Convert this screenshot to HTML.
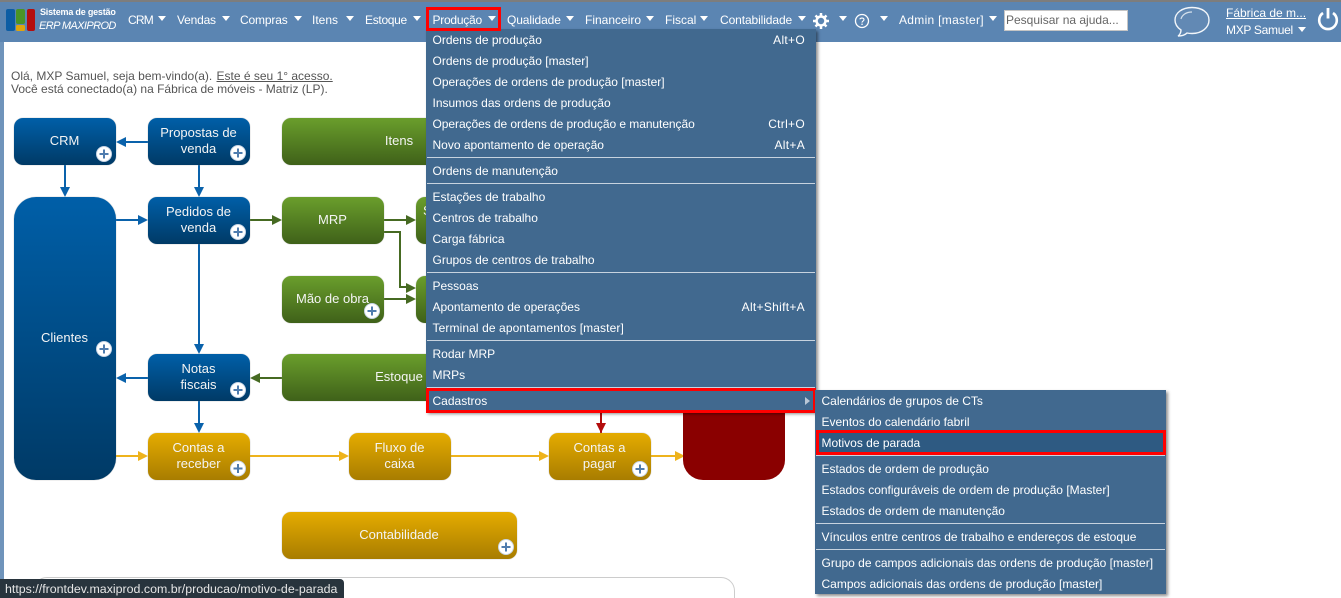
<!DOCTYPE html>
<html lang="pt-BR"><head><meta charset="utf-8"><title>ERP MAXIPROD</title>
<style>
html,body{margin:0;padding:0;width:1341px;height:598px;overflow:hidden;background:#fff}
body{position:relative;font-family:"Liberation Sans",sans-serif;font-size:12px}
.a{position:absolute;white-space:nowrap}
#top{position:absolute;left:0;top:0;width:1341px;height:42px;background:#5b85b2;border-top:2px solid #7d7d7d;box-sizing:border-box}
#left{position:absolute;left:0;top:42px;width:4px;height:539px;background:#6f94bb}
.n{position:absolute;top:13px;color:#fff;font-size:12px;line-height:14px;white-space:nowrap}
.c{position:absolute;top:16px;width:0;height:0;border-left:4px solid transparent;border-right:4px solid transparent;border-top:5px solid #fff}
.menu{position:absolute;background:#41698f;box-shadow:2px 2px 3px rgba(0,0,0,.45)}
.i{position:absolute;left:6.5px;color:#fff;font-size:12px;line-height:14px;white-space:nowrap}
.s{position:absolute;right:11px;color:#fff;font-size:12px;line-height:14px;white-space:nowrap;letter-spacing:.3px}
.h{position:absolute;left:1px;right:1px;height:1px;background:#c7d3df}
.b{position:absolute;box-sizing:border-box;border-radius:9px;color:#f4f4f4;font-size:13px;line-height:16px;text-align:center;box-shadow:0 0 1px #999;padding-right:1px}
.bl{background:linear-gradient(#005fa8,#003a66)}
.gr{background:linear-gradient(#6a9e2c,#3f6119)}
.go{background:linear-gradient(#e5ac00,#a87d00)}
.r{position:absolute;border:3px solid #f00;box-sizing:border-box}
</style></head><body>
<div id="top"></div><div id="left"></div>

<svg class="a" style="left:5px;top:8px" width="32" height="24" viewBox="0 0 32 24">
<rect x="1" y="1" width="9" height="22" rx="2" fill="#0d5da4"/><rect x="11" y="1" width="9" height="15" rx="2" fill="#4a9426"/><rect x="11" y="17" width="9" height="6" rx="1.5" fill="#e0a50c"/><rect x="22" y="1" width="8" height="22" rx="2" fill="#b40d0d"/></svg>
<div class="a" style="left:40px;top:7px;color:#fff;font-size:9px;line-height:11px;font-weight:bold;letter-spacing:-.2px">Sistema de gestão</div>
<div class="a" style="left:39px;top:19px;color:#fff;font-size:11px;line-height:14px;font-style:italic;letter-spacing:-.6px">ERP MAXIPROD</div>

<div class="n" style="left:128px;letter-spacing:-.8px">CRM</div><div class="c" style="left:158px"></div>
<div class="n" style="left:177px;letter-spacing:-.2px">Vendas</div><div class="c" style="left:222px"></div>
<div class="n" style="left:240px;letter-spacing:-.15px">Compras</div><div class="c" style="left:294px"></div>
<div class="n" style="left:312px">Itens</div><div class="c" style="left:346px"></div>
<div class="n" style="left:365px;letter-spacing:-.3px">Estoque</div><div class="c" style="left:413px"></div>
<div class="n" style="left:507px;letter-spacing:-.1px">Qualidade</div><div class="c" style="left:566px"></div>
<div class="n" style="left:585px">Financeiro</div><div class="c" style="left:646px"></div>
<div class="n" style="left:665px">Fiscal</div><div class="c" style="left:700px"></div>
<div class="n" style="left:720px;letter-spacing:-.1px">Contabilidade</div><div class="c" style="left:798px"></div>

<svg class="a" style="left:813px;top:13px" width="16" height="16" viewBox="0 0 18 18"><g stroke="#fff" stroke-width="2.8"><path d="M9 0v18M0 9h18M2.800 2.800l12.400 12.400M15.200 2.800L2.800 15.200"/></g><circle cx="9" cy="9" r="5" fill="#5b85b2" stroke="#fff" stroke-width="2.800"/></svg>
<div class="c" style="left:839px"></div>
<svg class="a" style="left:854px;top:13px" width="16" height="16" viewBox="0 0 16 16"><circle cx="8" cy="8" r="6.500" fill="none" stroke="#fff" stroke-width="1.300"/><path d="M5.900 6.300C6 4.600 10 4.500 10 6.600c0 1.400-2 1.500-2 3" fill="none" stroke="#fff" stroke-width="1.100"/><rect x="7.400" y="10.600" width="1.300" height="1.400" fill="#fff"/></svg>
<div class="c" style="left:880px"></div>
<div class="n" style="left:899px;letter-spacing:.3px">Admin [master]</div><div class="c" style="left:989px"></div>
<div class="a" style="left:1004px;top:10px;width:124px;height:21px;box-sizing:border-box;background:#fff;border:1px solid #c5c5c5;color:#666;font-size:12px;line-height:19px;padding-left:1px;overflow:hidden">Pesquisar na ajuda...</div>

<svg class="a" style="left:1172px;top:4px" width="40" height="36" viewBox="0 0 40 36"><path d="M20 3.500C10 3.500 3 9 3 16c0 5 3 8 6 10 0 2-1 5-3 6 3 0 7-1 9-3 2 .5 3 .5 5 .5 10 0 17-6 17-13.500S30 3.500 20 3.500z" fill="#6289b4" stroke="#f2f6fa" stroke-width="1.400"/><path d="M9 15c1-4 5-7 11-7" fill="none" stroke="#d5e1ec" stroke-width="1.200"/></svg>
<div class="a" style="left:1226px;top:6px;color:#fff;font-size:12px;line-height:14px;text-decoration:underline">Fábrica de m...</div>
<div class="a" style="left:1226px;top:23px;color:#fff;font-size:12px;line-height:14px;letter-spacing:-.3px">MXP Samuel</div><div class="c" style="left:1298px;top:27px"></div>
<svg class="a" style="left:1316px;top:6px" width="24" height="26" viewBox="0 0 24 26"><path d="M7 7a8.800 8.800 0 1 0 10 0" fill="none" stroke="#fff" stroke-width="2.600"/><path d="M12 2v10.500" stroke="#fff" stroke-width="2.800"/></svg>

<div class="a" style="left:11px;top:70px;color:#555;font-size:12px;line-height:13px">Olá, MXP Samuel, seja bem-vindo(a). <span style="text-decoration:underline;margin-left:1px">Este é seu 1° acesso.</span><br>Você está conectado(a) na Fábrica de móveis - Matriz (LP).</div>

<div class="a" style="left:33px;top:577px;width:702px;height:40px;border:1px solid #ccc;border-radius:14px;box-sizing:border-box"></div>

<svg class="a" style="left:0;top:0" width="820" height="598" viewBox="0 0 820 598" fill="none">
<g stroke="#0a62ab" stroke-width="2" fill="none"><path d="M148 142h-24M65 165v24M199 165v24M116 220h24M199 244v102M148 378h-24M199 401v24"/></g>
<g fill="#0a62ab"><path d="M116 142l10-5v10zM65 197l-5-10h10zM199 197l-5-10h10zM148 220l-10-5v10zM199 354l-5-10h10zM116 378l10-5v10zM199 433l-5-10h10z"/></g>
<g stroke="#466a22" stroke-width="2" fill="none"><path d="M250 220h24M384 220h24M384 232h16v55h10M384 299h24M282 378h-24"/></g>
<g fill="#466a22"><path d="M282 220l-10-5v10zM416 220l-10-5v10zM416 288l-10-5v10zM416 299l-10-5v10zM250 378l10-5v10z"/></g>
<g stroke="#eeb31c" stroke-width="2" fill="none"><path d="M116 456h24M250 456h92M451 456h92M651 456h24"/></g>
<g fill="#eeb31c"><path d="M148 456l-10-5v10zM349 456l-10-5v10zM549 456l-10-5v10zM685 456l-10-5v10z"/></g>
<path d="M601 412v24" stroke="#b30d0d" stroke-width="2"/><path d="M601 433l-5-10h10z" fill="#b30d0d"/>
</svg>

<div class="b bl" style="left:14px;top:118px;width:102px;height:47px;line-height:46px">CRM</div>
<div class="b bl" style="left:148px;top:118px;width:102px;height:47px;padding-top:7px">Propostas de<br>venda</div>
<div class="b gr" style="left:282px;top:118px;width:235px;height:47px;line-height:46px">Itens</div>
<div class="b bl" style="left:14px;top:197px;width:102px;height:283px;border-radius:22px;padding-top:133px">Clientes</div>
<div class="b bl" style="left:148px;top:197px;width:102px;height:47px;padding-top:7px">Pedidos de<br>venda</div>
<div class="b gr" style="left:282px;top:197px;width:102px;height:47px;line-height:45px">MRP</div>
<div class="b gr" style="left:416px;top:197px;width:102px;height:47px"><span class="a" style="left:7px;top:6px">S</span></div>
<div class="b gr" style="left:282px;top:276px;width:102px;height:47px;line-height:45px">Mão de obra</div>
<div class="b gr" style="left:416px;top:276px;width:102px;height:47px"></div>
<div class="b bl" style="left:148px;top:354px;width:102px;height:47px;padding-top:7px">Notas<br>fiscais</div>
<div class="b gr" style="left:282px;top:354px;width:235px;height:47px;line-height:46px">Estoque</div>
<div class="b go" style="left:148px;top:433px;width:102px;height:47px;padding-top:7px">Contas a<br>receber</div>
<div class="b go" style="left:349px;top:433px;width:102px;height:47px;padding-top:7px">Fluxo de<br>caixa</div>
<div class="b go" style="left:549px;top:433px;width:102px;height:47px;padding-top:7px">Contas a<br>pagar</div>
<div class="a" style="left:683px;top:400px;width:102px;height:80px;background:#8a0000;border-radius:0 0 20px 20px"></div>
<div class="b go" style="left:282px;top:512px;width:235px;height:47px;line-height:45px">Contabilidade</div>

<svg class="a" style="left:0;top:0" width="520" height="560" viewBox="0 0 520 560">
<defs><g id="p"><circle r="7.500" fill="#fff" stroke="#c9d6e6"/><path d="M-4.500 0h9M0-4.500v9" stroke="#4f7cae" stroke-width="2"/></g></defs>
<use href="#p" x="104" y="154"/><use href="#p" x="238" y="153"/><use href="#p" x="238" y="232"/><use href="#p" x="104" y="349"/><use href="#p" x="372" y="311"/><use href="#p" x="238" y="390"/><use href="#p" x="238" y="468.500"/><use href="#p" x="506" y="547"/>
</svg>
<svg class="a" style="left:630px;top:458.500px" width="20" height="20" viewBox="0 0 20 20"><circle cx="10" cy="10" r="7.500" fill="#fff" stroke="#c9d6e6"/><path d="M5.500 10h9M10 5.500v9" stroke="#4f7cae" stroke-width="2"/></svg>

<div class="menu" style="left:426px;top:29px;width:390px;height:383px">
<div class="i" style="top:4px">Ordens de produção</div><div class="s" style="top:4px">Alt+O</div>
<div class="i" style="top:25px">Ordens de produção [master]</div>
<div class="i" style="top:46px">Operações de ordens de produção [master]</div>
<div class="i" style="top:67px">Insumos das ordens de produção</div>
<div class="i" style="top:88px;letter-spacing:-.06px">Operações de ordens de produção e manutenção</div><div class="s" style="top:88px">Ctrl+O</div>
<div class="i" style="top:109px">Novo apontamento de operação</div><div class="s" style="top:109px">Alt+A</div>
<div class="h" style="top:128px"></div>
<div class="i" style="top:135px">Ordens de manutenção</div>
<div class="h" style="top:154px"></div>
<div class="i" style="top:161px">Estações de trabalho</div>
<div class="i" style="top:182px">Centros de trabalho</div>
<div class="i" style="top:203px">Carga fábrica</div>
<div class="i" style="top:224px">Grupos de centros de trabalho</div>
<div class="h" style="top:243px"></div>
<div class="i" style="top:250px">Pessoas</div>
<div class="i" style="top:271px">Apontamento de operações</div><div class="s" style="top:271px">Alt+Shift+A</div>
<div class="i" style="top:292px;letter-spacing:.1px">Terminal de apontamentos [master]</div>
<div class="h" style="top:311px"></div>
<div class="i" style="top:318px">Rodar MRP</div>
<div class="i" style="top:339px">MRPs</div>
<div class="h" style="top:358px"></div>
<div class="i" style="top:365px">Cadastros</div>
<div class="a" style="left:379px;top:368px;width:0;height:0;border-top:4px solid transparent;border-bottom:4px solid transparent;border-left:5px solid #b9c7d6"></div>
</div>
<div class="a" style="left:426px;top:29px;width:390px;height:2px;background:#41698f"></div>
<div class="r" style="left:426px;top:7px;width:75px;height:24px"></div>
<div class="n" style="left:432.500px;top:13px;letter-spacing:-.25px">Produção</div><div class="c" style="left:488px"></div>
<div class="r" style="left:426px;top:388px;width:390px;height:25px"></div>

<div class="menu" style="left:815px;top:390px;width:351px;height:204px">
<div class="a" style="left:1px;top:41px;width:350px;height:22px;background:#2e5a82"></div>
<div class="i" style="top:4px">Calendários de grupos de CTs</div>
<div class="i" style="top:25px">Eventos do calendário fabril</div>
<div class="i" style="top:46px">Motivos de parada</div>
<div class="h" style="top:65px"></div>
<div class="i" style="top:72px">Estados de ordem de produção</div>
<div class="i" style="top:93px">Estados configuráveis de ordem de produção [Master]</div>
<div class="i" style="top:114px">Estados de ordem de manutenção</div>
<div class="h" style="top:133px"></div>
<div class="i" style="top:140px">Vínculos entre centros de trabalho e endereços de estoque</div>
<div class="h" style="top:159px"></div>
<div class="i" style="top:166px">Grupo de campos adicionais das ordens de produção [master]</div>
<div class="i" style="top:187px">Campos adicionais das ordens de produção [master]</div>
</div>
<div class="r" style="left:816px;top:430px;width:350px;height:25px"></div>

<div class="a" style="left:0;top:579px;width:344px;height:19px;background:#28343d;border-radius:0 4px 0 0;color:#e6e6e6;font-size:12.400px;line-height:20px;padding-left:5px;box-sizing:border-box">https://frontdev.maxiprod.com.br/producao/motivo-de-parada</div>
</body></html>
